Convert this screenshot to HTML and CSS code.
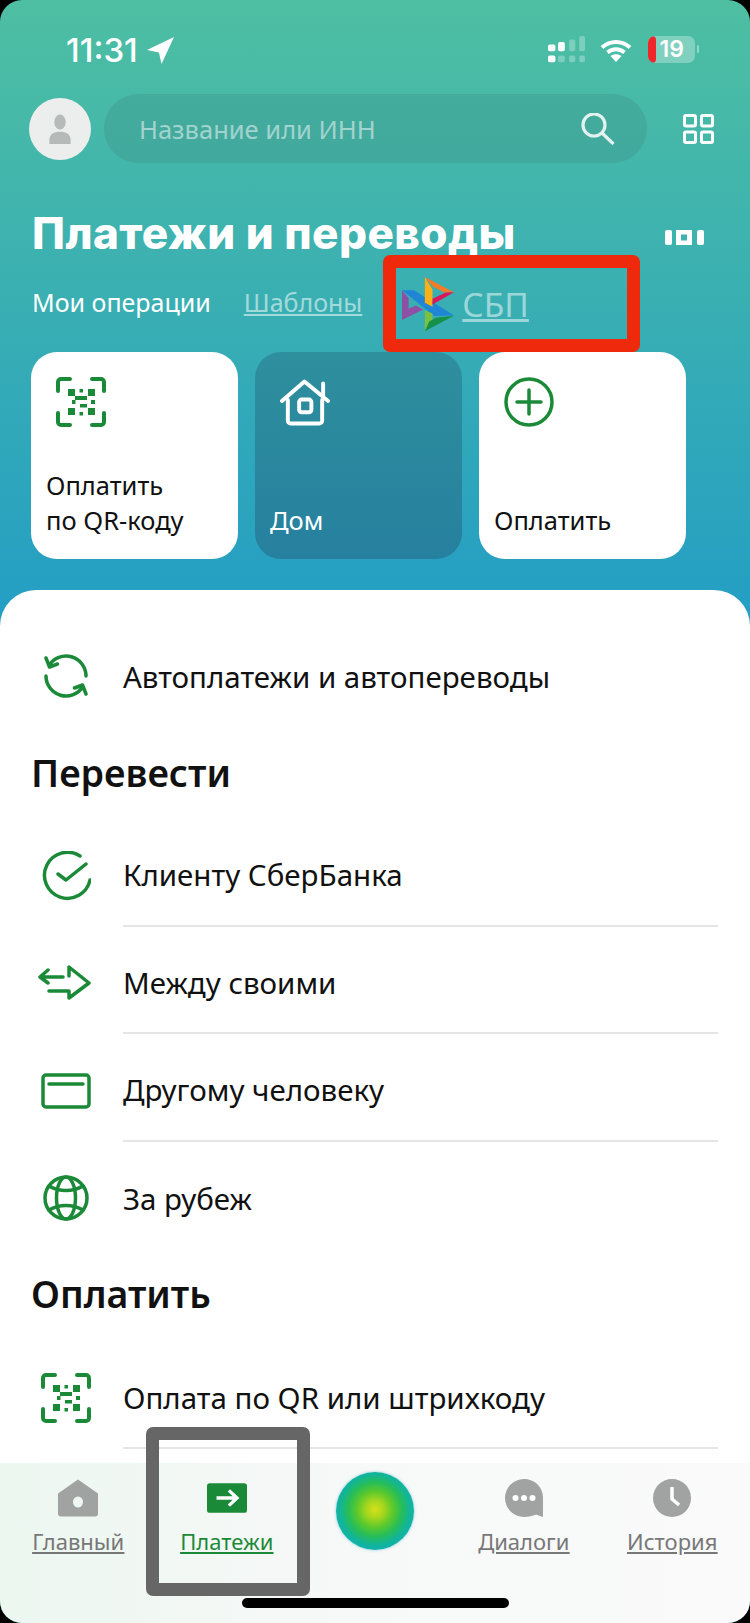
FILE: index.html
```html
<!DOCTYPE html>
<html lang="ru">
<head>
<meta charset="utf-8">
<title>Платежи и переводы</title>
<link rel="stylesheet" href="styles.css">
</head>
<body>
<div class="app">
  <header class="head">
    <div class="status">
      <div class="clock">
        <span class="time">11:31</span>
        <svg class="loc" viewBox="0 0 26 26"><path d="M26 0 0 12.500 11.500 15 14 26z"/></svg>
      </div>
      <div class="sys">
        <svg class="signal" viewBox="85 50 110 80">
          <g class="sig-on"><rect x="85" y="75" width="22" height="20" rx="5"/><rect x="85" y="108" width="22" height="20" rx="5"/><rect x="115" y="68" width="20" height="27" rx="5"/></g>
          <g class="sig-off"><rect x="115" y="108" width="20" height="20" rx="5"/><rect x="148" y="60" width="18" height="35" rx="5"/><rect x="148" y="108" width="18" height="20" rx="5"/><rect x="178" y="50" width="17" height="45" rx="5"/><rect x="178" y="108" width="17" height="20" rx="5"/></g>
        </svg>
        <svg class="wifi" viewBox="0 0 32 24"><path class="wifi-arc" d="M2 9.5C10 2 22 2 30 9.5M7.5 14.5c5-4.2 12-4.2 17 0"/><path class="wifi-dot" d="M16 24 10.5 18c3.3-2.4 7.700-2.400 11 0z"/></svg>
        <div class="battery"><span class="bat-red"></span><span class="bat-num">19</span></div>
        <span class="bat-nub"></span>
      </div>
    </div>

    <div class="topbar">
      <div class="avatar">
        <svg class="avatar-ico" viewBox="0 0 24 34"><ellipse cx="12" cy="9" rx="6.500" ry="8.500"/><path d="M0 34v-5c0-6 5-9 12-9s12 3 12 9v5z"/></svg>
      </div>
      <div class="search">
        <span class="search-ph">Название или ИНН</span>
        <svg class="search-ico" viewBox="0 0 34 32"><circle cx="13" cy="12" r="11"/><path d="m21 20 11.500 11"/></svg>
      </div>
      <svg class="grid-ico" viewBox="0 0 31 30"><rect x="1.500" y="1.500" width="11" height="10.500" rx="1.500"/><rect x="18.500" y="1.500" width="11" height="10.500" rx="1.500"/><rect x="1.500" y="18" width="11" height="10.500" rx="1.500"/><rect x="18.500" y="18" width="11" height="10.500" rx="1.500"/></svg>
    </div>

    <div class="title-row">
      <h1 class="title">Платежи и переводы</h1>
      <svg class="pager" viewBox="0 0 39 15"><rect x="0" y="0" width="7" height="15" rx="2"/><path class="pager-box" fill-rule="evenodd" d="M11 0h16v15H11zM16 4.500v6h6v-6z"/><rect x="32" y="0" width="7" height="15" rx="2"/></svg>
    </div>

    <nav class="tabs">
      <span class="tab-on">Мои операции</span>
      <a class="tab-link" href="#">Шаблоны</a>
      <svg class="sbp" viewBox="68 70 160 170">
        <path fill="#8e4fa5" d="M68 112v90l64-32-22-12-22 10v-33z"/>
        <path fill="#1f86d6" d="M68 112h37l120 76-60 2z"/>
        <path fill="#fbb116" d="M137 72v78l23 12v-52z"/>
        <path fill="#f47b28" d="M137 72l88 46-30 1-35-19z"/>
        <path fill="#d8175c" d="M160 155v-17l40-19 25-1z"/>
        <path fill="#7ac043" d="M137 172v64l23-30v-24z"/>
        <path fill="#15924a" d="M137 236l88-47-55 6-20 11z"/>
      </svg>
      <a class="tab-sbp" href="#">СБП</a>
    </nav>

    <div class="cards">
      <div class="card">
        <svg class="card-ico" viewBox="0 0 50 50">
          <path class="qr-frame" d="M2 14V5a3 3 0 0 1 3-3h9M36 2h9a3 3 0 0 1 3 3v9M48 36v9a3 3 0 0 1-3 3h-9M14 48H5a3 3 0 0 1-3-3v-9"/>
          <path class="qr-fill" d="M12 12h7v7h-7zM32 12h7v7h-7zM12 31h7v7h-7zM32 31h7v7h-7zM23.500 12h3.500v3.500h-3.500zM23.500 35h3.500v3.500h-3.500zM16 23h3.500v4h-3.500zM35 23h4v4h-4zM19 19h12v4H19zM24 27h7v3.500h-7z"/>
        </svg>
        <span class="card-text">Оплатить<br>по QR-коду</span>
      </div>
      <div class="card card-home">
        <svg class="card-ico" viewBox="0 0 51 48">
          <path class="home-line" d="M2 23 25 3l24 20M44 5v13M8 22v21a3 3 0 0 0 3 3h29a3 3 0 0 0 3-3V22"/>
          <rect class="home-line" x="19.500" y="21.500" width="12.500" height="13" rx="2.500"/>
        </svg>
        <span class="card-text">Дом</span>
      </div>
      <div class="card">
        <svg class="card-ico" viewBox="0 0 50 50"><circle class="ico-line" cx="25" cy="25" r="23"/><path class="ico-line" d="M25 13v24M13 25h24"/></svg>
        <span class="card-text">Оплатить</span>
      </div>
    </div>
  </header>

  <main class="sheet">
    <div class="row row-first">
      <svg class="row-ico ico-auto" viewBox="0 0 44 44">
        <path class="ico-line" d="M5 11.500A20 20 0 0 1 42 22M39 32.500A20 20 0 0 1 2 22M2 4l3.500 9 8-3M42 40l-3.500-9-8 3"/>
      </svg>
      <div class="row-body row-plain"><span>Автоплатежи и автопереводы</span></div>
    </div>

    <h2 class="section">Перевести</h2>
    <div class="row">
      <svg class="row-ico ico-check" viewBox="0 0 50 50">
        <path class="ico-line" d="M39 5A23 23 0 1 0 49 29M17 23l8 6 20-16"/>
      </svg>
      <div class="row-body"><span>Клиенту СберБанка</span></div>
    </div>
    <div class="row">
      <svg class="row-ico ico-swap" viewBox="0 0 53 36">
        <path class="ico-line" d="M25 12H4M10 5l-8 7 8 6M11 26h20v7l20-15L31 2v9"/>
      </svg>
      <div class="row-body"><span>Между своими</span></div>
    </div>
    <div class="row">
      <svg class="row-ico ico-cardline" viewBox="0 0 50 36">
        <rect class="ico-line" x="2" y="2" width="46" height="32" rx="3"/><path class="ico-line" d="M8 11h34"/>
      </svg>
      <div class="row-body"><span>Другому человеку</span></div>
    </div>
    <div class="row">
      <svg class="row-ico ico-globe" viewBox="0 0 46 46">
        <circle class="ico-line" cx="23" cy="23" r="21"/><ellipse class="ico-line" cx="23" cy="23" rx="9.500" ry="21"/><path class="ico-line" d="M6 11c10 6 24 6 34 0M6 35c10-6 24-6 34 0"/>
      </svg>
      <div class="row-body row-plain"><span>За рубеж</span></div>
    </div>

    <h2 class="section section-pay">Оплатить</h2>
    <div class="row">
      <svg class="row-ico" viewBox="0 0 50 50">
        <path class="qr-frame" d="M2 14V5a3 3 0 0 1 3-3h9M36 2h9a3 3 0 0 1 3 3v9M48 36v9a3 3 0 0 1-3 3h-9M14 48H5a3 3 0 0 1-3-3v-9"/>
        <path class="qr-fill" d="M12 12h7v7h-7zM32 12h7v7h-7zM12 31h7v7h-7zM32 31h7v7h-7zM23.500 12h3.500v3.500h-3.500zM23.500 35h3.500v3.500h-3.500zM16 23h3.500v4h-3.500zM35 23h4v4h-4zM19 19h12v4H19zM24 27h7v3.500h-7z"/>
      </svg>
      <div class="row-body"><span>Оплата по QR или штрихкоду</span></div>
    </div>
  </main>

  <footer class="tabbar">
    <a class="bar-item" href="#">
      <svg class="bar-ico" viewBox="0 0 40 37"><path class="bar-fill" fill-rule="evenodd" d="M20 0 40 14v20a3 3 0 0 1-3 3H3a3 3 0 0 1-3-3V14zM20 17a5 5.500 0 1 0 0 11 5 5.500 0 0 0 0-11z"/></svg>
      <span class="bar-label">Главный</span>
    </a>
    <a class="bar-item bar-active" href="#">
      <svg class="bar-ico" viewBox="0 0 42 31"><rect class="pay-box" width="42" height="31" rx="3"/><path class="pay-arrow" d="M10 15.500h21M23 7.500l8.500 8-8.500 8"/></svg>
      <span class="bar-label">Платежи</span>
    </a>
    <a class="bar-item bar-orb" href="#"><span class="orb"></span></a>
    <a class="bar-item" href="#">
      <svg class="bar-ico" viewBox="0 0 38 38"><path class="bar-fill" d="M19 0c10.500 0 19 8 19 18.500V38l-7-2.500C27.500 37 23.500 38 19 38 8.500 38 0 29.500 0 19S8.500 0 19 0z"/><circle class="bar-hole" cx="10.500" cy="19" r="3"/><circle class="bar-hole" cx="19" cy="19" r="3"/><circle class="bar-hole" cx="27.500" cy="19" r="3"/></svg>
      <span class="bar-label">Диалоги</span>
    </a>
    <a class="bar-item" href="#">
      <svg class="bar-ico" viewBox="0 0 38 38"><circle class="bar-fill" cx="19" cy="19" r="19"/><path class="clock-hand" d="M19 8v12l7 6"/></svg>
      <span class="bar-label">История</span>
    </a>
    <span class="home-bar"></span>
  </footer>

  <span class="mark mark-red"></span>
  <span class="mark mark-grey"></span>
</div>
</body>
</html>
```

FILE: styles.css
```css
* { box-sizing: border-box; }
html, body { margin: 0; padding: 0; background: #000; }
body { width: 750px; height: 1623px; overflow: hidden; font-family: "Noto Sans", "Open Sans", sans-serif; }
a { color: inherit; }
svg { display: block; flex: none; fill: none; }

.app {
  position: relative;
  width: 750px;
  height: 1623px;
  display: flex;
  flex-direction: column;
  overflow: hidden;
  border-radius: 22px;
  background: linear-gradient(180deg, #4ebfa2 0, #259fc3 600px);
}

.head { height: 590px; flex: none; }

.status { height: 94px; display: flex; justify-content: space-between; padding: 33px 0 0 66px; }
.clock { display: flex; align-items: flex-start; gap: 9px; color: #fff; }
.time { font-family: Inter, sans-serif; font-size: 33px; line-height: 34px; font-weight: 500; }
.loc { width: 27px; height: 27px; margin-top: 4px; fill: #fff; }
.sys { display: flex; align-items: flex-start; padding-right: 51px; }
.signal { width: 37px; height: 27px; margin: 3px 15px 0 0; }
.sig-on rect { fill: #fff; }
.sig-off rect { fill: rgba(255,255,255,.28); }
.wifi { width: 32px; height: 24px; margin: 5px 16px 0 0; }
.wifi-arc { stroke: #fff; stroke-width: 4; }
.wifi-dot { fill: #fff; }
.battery { position: relative; width: 47px; height: 27px; margin-top: 3px; border-radius: 7px; background: rgba(255,255,255,.3); overflow: hidden; text-align: right; }
.bat-red { position: absolute; left: 0; top: 0; bottom: 0; width: 8px; background: #f0262b; border-radius: 4px; }
.bat-num { position: relative; display: block; padding-right: 11px; font-family: Inter, sans-serif; font-size: 23px; line-height: 27px; font-weight: 600; color: #fff; }
.bat-nub { width: 2px; height: 8px; margin: 12px 0 0 2px; background: rgba(255,255,255,.4); border-radius: 1px; }

.topbar { display: flex; align-items: center; height: 69px; padding-left: 29px; }
.avatar { width: 62px; height: 62px; border-radius: 50%; background: #eceeed; display: flex; align-items: center; justify-content: center; }
.avatar-ico { width: 24px; height: 30px; fill: #b6bab9; }
.search { width: 543px; height: 69px; margin-left: 13px; padding: 0 32px 0 35px; border-radius: 35px; background: rgba(60,130,125,.26); display: flex; align-items: center; justify-content: space-between; }
.search-ph { font-size: 25.500px; color: rgba(255,255,255,.5); }
.search-ico { width: 34px; height: 32px; stroke: rgba(255,255,255,.85); stroke-width: 3.200; }
.search-ico * { stroke: inherit; }
.grid-ico { width: 31px; height: 30px; margin-left: 36px; }
.grid-ico rect { stroke: #fff; stroke-width: 3; }

.title-row { display: flex; align-items: center; justify-content: space-between; height: 46px; margin-top: 47px; padding: 0 46px 0 32px; }
.title { margin: 0; font-family: Inter, "Noto Sans", sans-serif; font-size: 44px; line-height: 46px; font-weight: 800; letter-spacing: .45px; color: #fff; }
.pager { width: 39px; height: 15px; fill: #fff; margin-top: 8px; }
.pager-box { fill: #fff; }

.tabs { display: flex; align-items: center; height: 40px; margin-top: 26px; padding-left: 32px; }
.tab-on { font-size: 25px; color: #fff; }
.tab-link { margin-left: 33px; font-size: 25px; color: rgba(255,255,255,.55); }
.sbp { width: 53px; height: 57px; margin: 4px 7px 0 40px; }
.tab-sbp { font-size: 33.500px; line-height: 40px; margin-top: 3px; color: rgba(255,255,255,.5); }

.cards { display: flex; gap: 17px; margin-top: 30px; padding-left: 31px; }
.card { width: 207px; height: 207px; padding: 25px 15px 21px; border-radius: 26px; background: #fff; display: flex; flex-direction: column; justify-content: space-between; color: #111; }
.card-home { background: linear-gradient(180deg, #2e8f9d, #26809f); color: #fff; }
.card-ico { width: 50px; height: 50px; margin-left: 10px; }
.card-text { font-size: 25.500px; line-height: 35px; }

.ico-line { stroke: #1b8a38; stroke-width: 3.500; stroke-linecap: round; stroke-linejoin: round; }
.home-line { stroke: #fff; stroke-width: 4; stroke-linecap: round; stroke-linejoin: round; }
.qr-frame { stroke: #1b8a38; stroke-width: 4; stroke-linecap: round; }
.qr-fill { fill: #1b8a38; }

.sheet { flex: 1; padding-top: 29.500px; background: #fff; border-radius: 36px 36px 0 0; color: #111; }
.row { display: flex; align-items: center; height: 107.500px; padding-left: 41px; }
.row-ico { width: 50px; height: 50px; margin-top: 6px; }
.ico-auto { width: 44px; height: 44px; margin-left: 3px; margin-right: 3px; }
.ico-swap { width: 53px; height: 36px; margin-left: -3px; }
.ico-cardline { height: 36px; }
.ico-globe { width: 46px; height: 46px; margin-left: 2px; margin-right: 2px; }
.row-body { flex: 1; height: 100%; margin: 0 32px; padding-top: 6px; display: flex; align-items: center; border-bottom: 2px solid #e4e6e5; font-size: 29.500px; }
.row-plain { border-bottom: 0; }
.section { height: 46px; margin: 22.500px 0 23.500px; padding-left: 31px; font-size: 37.500px; line-height: 46px; font-weight: 600; }
.section-pay { margin: 22px 0 24.500px; }

.tabbar { position: relative; display: grid; grid-template-columns: repeat(5, 148.500px); height: 160px; flex: none; padding-left: 4px; background: linear-gradient(90deg, #ecf7f0, #f7f8f8 45%, #fafafa); }
.bar-item { display: flex; flex-direction: column; align-items: center; height: 100%; padding-top: 16px; color: #777; }
.bar-ico { width: 40px; height: 38px; margin-bottom: 9px; }
.bar-label { font-size: 22px; line-height: 30px; text-decoration: underline; }
.bar-fill { fill: #a0a3a2; }
.bar-hole { fill: #fff; }
.clock-hand { stroke: #fff; stroke-width: 3.500; }
.bar-active { color: #1b8a38; }
.pay-box { fill: #1b8a38; }
.pay-arrow { stroke: #fff; stroke-width: 3.500; }
.bar-orb { padding-top: 9px; }
.orb { width: 78px; height: 78px; border-radius: 50%; background: radial-gradient(circle at 50% 48%, #d6e01a 0, #a5d61e 16%, #5cc92c 32%, #27bd58 48%, #12b596 62%, #10b0b8 76%, #1aa6bd 90%, #30b6c4 100%); box-shadow: 0 0 3px rgba(20,170,180,.5); }
.home-bar { position: absolute; left: 242px; top: 135px; width: 267px; height: 10px; border-radius: 5px; background: #000; }

.mark { position: absolute; border-style: solid; border-width: 13px; border-radius: 7px; }
.mark-red { left: 383px; top: 255px; width: 257px; height: 97px; border-color: #ef2a0c; }
.mark-grey { left: 146px; top: 1427px; width: 164px; height: 169px; border-color: #666; }
```
